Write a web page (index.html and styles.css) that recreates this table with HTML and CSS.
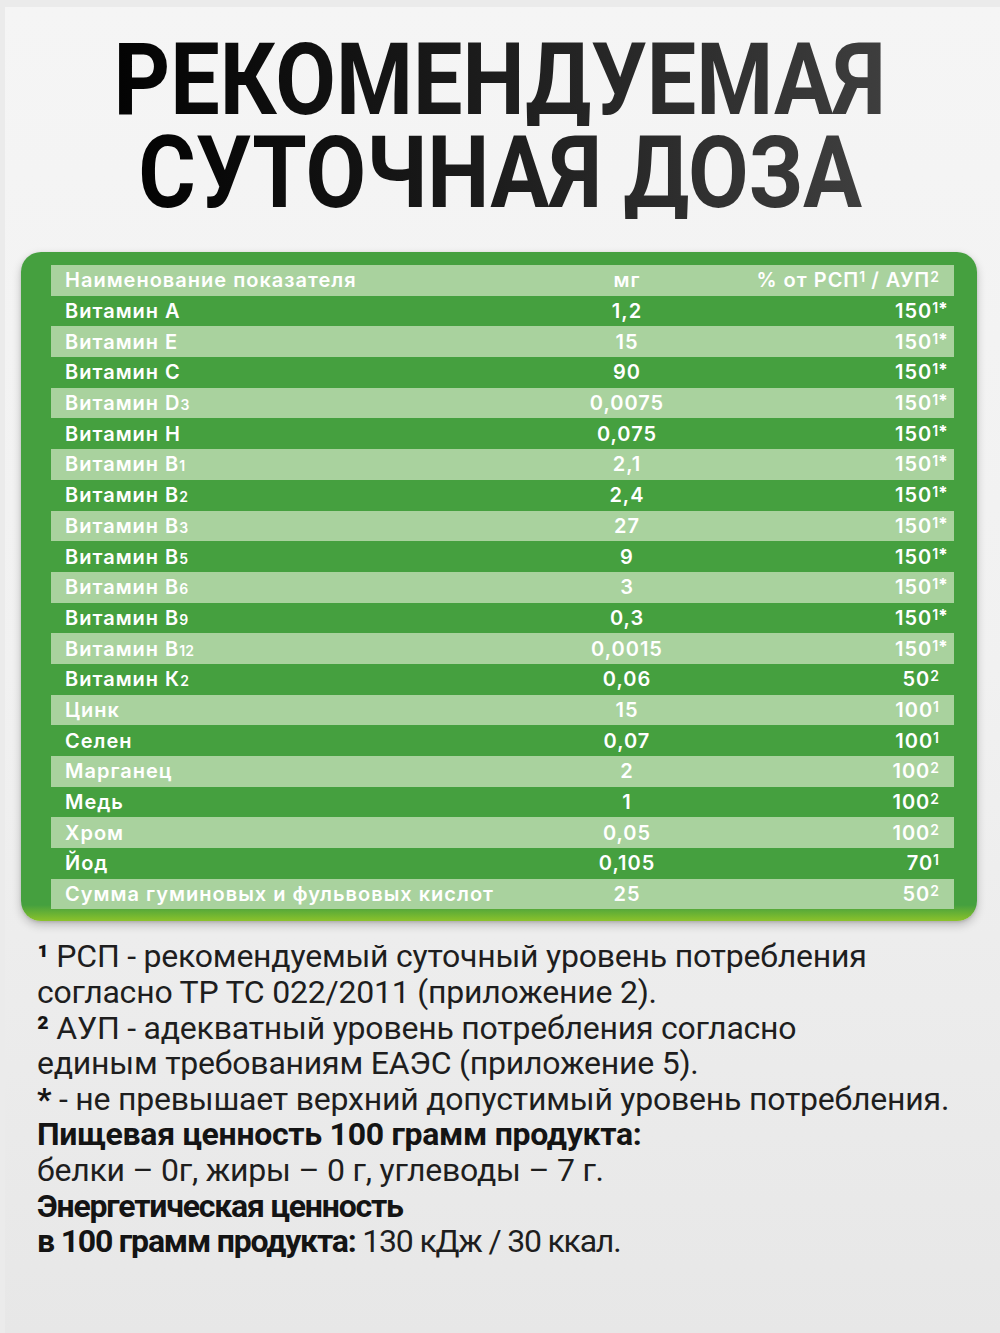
FILE: index.html
```html
<!DOCTYPE html>
<html lang="ru">
<head>
<meta charset="utf-8">
<title>Рекомендуемая суточная доза</title>
<link rel="stylesheet" href="styles.css">
</head>
<body>
<div class="page">
  <h1 class="title">
    <span class="title-line"><span class="title-text">РЕКОМЕНДУЕМАЯ</span></span>
    <span class="title-line"><span class="title-text">СУТОЧНАЯ ДОЗА</span></span>
  </h1>

  <div class="card">
    <div class="table">
      <div class="row light head"><span class="c-name">Наименование показателя</span><span class="c-mg">мг</span><span class="c-pct">% от РСП<span class="sup">1</span> / АУП<span class="sup">2</span></span></div>
      <div class="row"><span class="c-name">Витамин А</span><span class="c-mg">1,2</span><span class="c-pct">150<span class="sup">1</span><span class="ast">*</span></span></div>
      <div class="row light"><span class="c-name">Витамин Е</span><span class="c-mg">15</span><span class="c-pct">150<span class="sup">1</span><span class="ast">*</span></span></div>
      <div class="row"><span class="c-name">Витамин С</span><span class="c-mg">90</span><span class="c-pct">150<span class="sup">1</span><span class="ast">*</span></span></div>
      <div class="row light"><span class="c-name">Витамин D<span class="sub">3</span></span><span class="c-mg">0,0075</span><span class="c-pct">150<span class="sup">1</span><span class="ast">*</span></span></div>
      <div class="row"><span class="c-name">Витамин Н</span><span class="c-mg">0,075</span><span class="c-pct">150<span class="sup">1</span><span class="ast">*</span></span></div>
      <div class="row light"><span class="c-name">Витамин В<span class="sub">1</span></span><span class="c-mg">2,1</span><span class="c-pct">150<span class="sup">1</span><span class="ast">*</span></span></div>
      <div class="row"><span class="c-name">Витамин В<span class="sub">2</span></span><span class="c-mg">2,4</span><span class="c-pct">150<span class="sup">1</span><span class="ast">*</span></span></div>
      <div class="row light"><span class="c-name">Витамин В<span class="sub">3</span></span><span class="c-mg">27</span><span class="c-pct">150<span class="sup">1</span><span class="ast">*</span></span></div>
      <div class="row"><span class="c-name">Витамин В<span class="sub">5</span></span><span class="c-mg">9</span><span class="c-pct">150<span class="sup">1</span><span class="ast">*</span></span></div>
      <div class="row light"><span class="c-name">Витамин В<span class="sub">6</span></span><span class="c-mg">3</span><span class="c-pct">150<span class="sup">1</span><span class="ast">*</span></span></div>
      <div class="row"><span class="c-name">Витамин В<span class="sub">9</span></span><span class="c-mg">0,3</span><span class="c-pct">150<span class="sup">1</span><span class="ast">*</span></span></div>
      <div class="row light"><span class="c-name">Витамин В<span class="sub">12</span></span><span class="c-mg">0,0015</span><span class="c-pct">150<span class="sup">1</span><span class="ast">*</span></span></div>
      <div class="row"><span class="c-name">Витамин К<span class="sub">2</span></span><span class="c-mg">0,06</span><span class="c-pct">50<span class="sup">2</span></span></div>
      <div class="row light"><span class="c-name">Цинк</span><span class="c-mg">15</span><span class="c-pct">100<span class="sup">1</span></span></div>
      <div class="row"><span class="c-name">Селен</span><span class="c-mg">0,07</span><span class="c-pct">100<span class="sup">1</span></span></div>
      <div class="row light"><span class="c-name">Марганец</span><span class="c-mg">2</span><span class="c-pct">100<span class="sup">2</span></span></div>
      <div class="row"><span class="c-name">Медь</span><span class="c-mg">1</span><span class="c-pct">100<span class="sup">2</span></span></div>
      <div class="row light"><span class="c-name">Хром</span><span class="c-mg">0,05</span><span class="c-pct">100<span class="sup">2</span></span></div>
      <div class="row"><span class="c-name">Йод</span><span class="c-mg">0,105</span><span class="c-pct">70<span class="sup">1</span></span></div>
      <div class="row light"><span class="c-name">Сумма гуминовых и фульвовых кислот</span><span class="c-mg">25</span><span class="c-pct">50<span class="sup">2</span></span></div>
    </div>
  </div>

  <div class="notes">
    <p class="note"><b class="mark">¹</b> РСП - рекомендуемый суточный уровень потребления<br>согласно ТР ТС 022/2011 (приложение 2).</p>
    <p class="note"><b class="mark">²</b> АУП - адекватный уровень потребления согласно<br>единым требованиям ЕАЭС (приложение 5).</p>
    <p class="note"><b class="mark star">*</b> - не превышает верхний допустимый уровень потребления.</p>
    <p class="note"><b>Пищевая ценность 100 грамм продукта:</b><br>белки – 0г, жиры – 0 г, углеводы – 7 г.</p>
    <p class="note energy"><b>Энергетическая ценность<br>в 100 грамм продукта:</b> 130 кДж / 30 ккал.</p>
  </div>
</div>
</body>
</html>
```

FILE: styles.css
```css
html, body {
  margin: 0;
  padding: 0;
}

body {
  background: #ebebeb;
  width: 1000px;
  height: 1333px;
  overflow: hidden;
}

.page {
  margin: 7px 0 0 5px;
  height: 1326px;
  background: linear-gradient(180deg, #f5f5f5 0%, #f1f1f1 50%, #e7e7e7 100%);
  padding-top: 26px;
  box-sizing: border-box;
}

.title {
  margin: 0 0 0 -5px;
  padding: 0;
  font-family: Roboto, "Liberation Sans", sans-serif;
  font-weight: 700;
  font-size: 100px;
  line-height: 93px;
  text-align: center;
  letter-spacing: 0;
}

.title-line {
  display: block;
  height: 93px;
}

.title-text {
  display: inline-block;
  transform: scaleX(0.88);
  transform-origin: center;
  background: linear-gradient(90deg, #030303 0%, #1a1a1a 45%, #3e3e3e 100%);
  -webkit-background-clip: text;
  background-clip: text;
  color: transparent;
}

.card {
  margin: 33px 0 0 16px;
  width: 956px;
  box-sizing: border-box;
  padding: 13px 23px 12px 30px;
  border-radius: 20px;
  background: linear-gradient(180deg, #45a03f 0%, #45a03f 97.6%, #6db433 99%, #8cc22b 100%);
  box-shadow: 0 4px 10px rgba(0, 0, 0, 0.22), 0 1px 3px rgba(0, 0, 0, 0.12);
}

.table {
  display: flex;
  flex-direction: column;
}

.row {
  display: grid;
  grid-template-columns: 496px 160px 248px;
  height: 30.7px;
  align-items: center;
  font-family: Inter, "Open Sans", sans-serif;
  font-weight: 600;
  font-size: 20px;
  letter-spacing: 1px;
  color: #ffffff;
  white-space: nowrap;
}

.row.light {
  background: #a9d29e;
}

.c-name {
  padding-left: 14px;
}

.c-mg {
  text-align: center;
}

.c-pct {
  text-align: right;
  padding-right: 16px;
}

.sup {
  font-size: 14px;
  vertical-align: 5px;
  letter-spacing: 0;
}

.ast {
  font-size: 17px;
  vertical-align: 3px;
  margin-right: -9px;
  font-weight: 800;
  letter-spacing: 0;
}

.sub {
  font-size: 14px;
  vertical-align: baseline;
  letter-spacing: 0;
}

.notes {
  margin: 18px 0 0 32px;
  font-family: Roboto, "Liberation Sans", sans-serif;
  font-size: 32px;
  line-height: 35.6px;
  letter-spacing: -0.22px;
  color: #1e1e1e;
  white-space: nowrap;
}

.note {
  margin: 0;
}

.note b {
  font-weight: 700;
  color: #141414;
  letter-spacing: -0.3px;
}

.note.energy,
.note.energy b {
  letter-spacing: -1.2px;
}

.mark.star {
  font-size: 32px;
}
```
